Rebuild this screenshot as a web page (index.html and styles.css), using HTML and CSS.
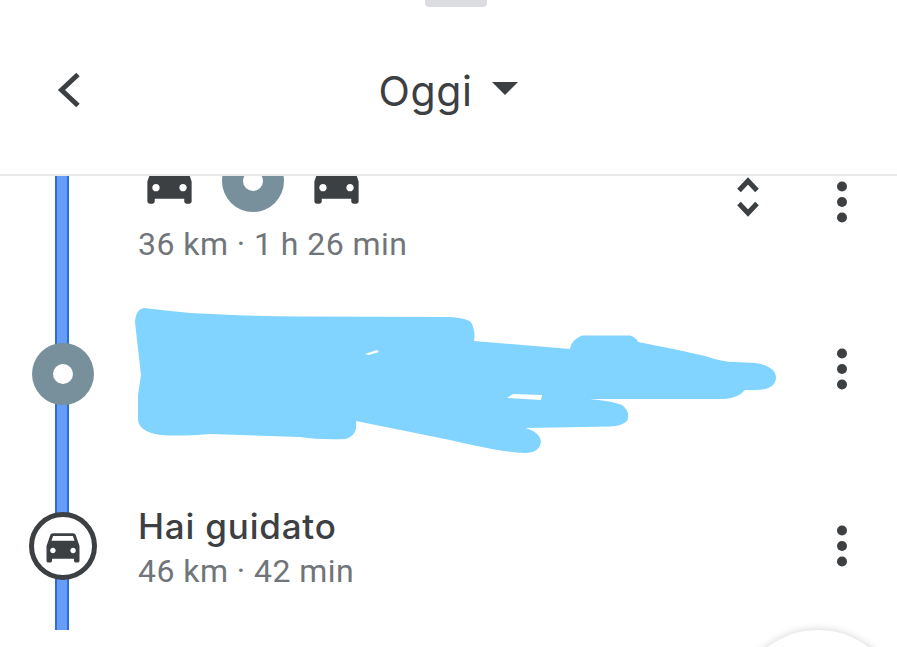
FILE: index.html
```html
<!DOCTYPE html>
<html lang="en">
<head>
    <meta charset="UTF-8">
    <meta name="viewport" content="width=device-width, initial-scale=1.0">
    <title>Oggi</title>
    <link rel="stylesheet" href="styles.css">
</head>
<body>
    <svg width="0" height="0" class="defs">
        <symbol id="car" viewBox="0 0 24 24">
            <path d="M18.92 6.01C18.72 5.42 18.16 5 17.5 5h-11c-.66 0-1.21.42-1.42 1.01L3 12v8c0 .55.45 1 1 1h1c.55 0 1-.45 1-1v-1h12v1c0 .55.45 1 1 1h1c.55 0 1-.45 1-1v-8l-2.08-5.99zM6.500 16c-.83 0-1.500-.67-1.500-1.500S5.670 13 6.500 13s1.500.67 1.500 1.500S7.330 16 6.500 16zm11 0c-.83 0-1.500-.67-1.500-1.500s.67-1.500 1.500-1.500 1.500.67 1.500 1.500-.67 1.500-1.500 1.500zM5.700 9.200l.9-2.700h10.800l.9 2.700H5.700z"/>
        </symbol>
        <symbol id="stop" viewBox="0 0 62 62">
            <circle cx="31" cy="31" r="31" fill="#78909c"/>
            <circle cx="31" cy="31" r="10" fill="#fff"/>
        </symbol>
        <symbol id="dots" viewBox="0 0 24 48">
            <circle cx="12" cy="8.500" r="5"/>
            <circle cx="12" cy="24" r="5"/>
            <circle cx="12" cy="39.500" r="5"/>
        </symbol>
    </svg>

    <div class="screen">
        <div class="handle"></div>

        <!-- Header -->
        <header class="topbar">
            <button class="back" aria-label="Indietro">
                <svg width="24" height="36" viewBox="0 0 24 36"><path d="M21 2.500 4.500 18 21 33.500"/></svg>
            </button>
            <div class="title">
                <span>Oggi</span>
                <svg class="caret" width="26" height="13" viewBox="0 0 26 13"><path d="M0 0h26L13 13z"/></svg>
            </div>
        </header>

        <!-- Timeline -->
        <main class="timeline">
            <section class="row row-first">
                <div class="marker"></div>
                <div class="info">
                    <div class="chips">
                        <svg class="chip-car"><use href="#car"/></svg>
                        <svg class="chip-stop"><use href="#stop"/></svg>
                        <svg class="chip-car"><use href="#car"/></svg>
                    </div>
                    <p class="meta">36 km · 1 h 26 min</p>
                </div>
                <svg class="expand" width="24" height="42" viewBox="0 0 24 42">
                    <path d="M3 15.500 12 6 21 15.500M3 28.500 12 38 21 28.500"/>
                </svg>
                <svg class="more"><use href="#dots"/></svg>
            </section>

            <section class="row row-place">
                <div class="marker">
                    <svg class="stop-big"><use href="#stop"/></svg>
                </div>
                <div class="info"></div>
                <svg class="more"><use href="#dots"/></svg>
            </section>

            <section class="row row-drive">
                <div class="marker">
                    <div class="drive-badge">
                        <svg class="badge-car"><use href="#car"/></svg>
                    </div>
                </div>
                <div class="info">
                    <h2 class="name">Hai guidato</h2>
                    <p class="meta">46 km · 42 min</p>
                </div>
                <svg class="more"><use href="#dots"/></svg>
            </section>
        </main>

        <!-- Hand drawn cover over the place name -->
        <svg class="scribble" width="897" height="647" viewBox="0 0 897 647">
            <path class="ink" d="M135 322Q136 308 145 308Q152 309 190 313Q240 316 300 316.500L450 317Q466 318 471 322Q476 332 474 341L570 349Q571 340 582 335.500L630 335.500Q637 338 638 342Q680 350 705 356Q722 362 735 362L755 363Q776 366 776 378Q775 390 755 390L745 390Q738 398 725 399L590 399Q612 401 622 405Q631 412 627 421Q622 426 610 426.500L525 428Q540 432 541 442Q539 453 525 453Q500 452 450 440L356 421Q358 436 345 439Q320 440 300 437L210 434Q170 437 155 434Q139 430 138 420L138 395L141 375L137 340Z"/>
            <path class="gap" d="M507 398 513 394 542 395 541 400Z"/>
            <path class="gap" d="M365 354 377 350 379 352 369 355Z"/>
        </svg>

        <div class="fab"></div>
    </div>
</body>
</html>
```

FILE: styles.css
```css
/* Global Styling */
body {
    margin: 0;
    background: #ffffff;
    color: #3c4043;
    font-family: Inter, Roboto, sans-serif;
}

.defs {
    position: absolute;
}

svg {
    display: block;
    fill: #3c4043;
}

.screen {
    width: 897px;
    height: 647px;
    position: relative;
    overflow: hidden;
}

/* Header */
.handle {
    width: 62px;
    height: 7px;
    position: absolute;
    top: 0;
    left: 425px;
    border-radius: 0 0 4px 4px;
    background: #dcdde0;
}

.topbar {
    height: 174px;
    border-bottom: 2px solid #e8e9ea;
    display: flex;
    align-items: center;
    justify-content: center;
    position: relative;
}

.back {
    position: absolute;
    left: 57px;
    top: 72px;
    padding: 0;
    border: 0;
    background: none;
}

.back path {
    fill: none;
    stroke: #3c4043;
    stroke-width: 5;
}

.title {
    display: flex;
    align-items: center;
    gap: 20px;
    font-size: 41px;
    letter-spacing: 0.6px;
    line-height: 48px;
    margin-top: 8px;
}

.caret {
    margin-top: -5px;
}

/* Timeline */
.timeline {
    position: relative;
    height: 471px;
    overflow: hidden;
}

.timeline::before {
    content: "";
    position: absolute;
    left: 55px;
    top: 0;
    width: 10px;
    height: 454px;
    background: #669df6;
    border-left: 2px solid #2a6fd8;
    border-right: 2px solid #2a6fd8;
}

.row {
    display: flex;
    position: relative;
}

.row-first {
    height: 124px;
}

.row-place {
    height: 148px;
    align-items: center;
}

.row-drive {
    height: 196px;
    align-items: center;
}

.marker {
    width: 125px;
    flex: none;
    display: flex;
    justify-content: center;
}

.info {
    flex: 1;
    padding-left: 13px;
}

.chips {
    display: flex;
    align-items: center;
    gap: 23px;
    margin: -26px 0 0 2px;
}

.chip-car {
    width: 59px;
    height: 59px;
}

.chip-stop {
    width: 62px;
    height: 62px;
}

.meta {
    margin: 0;
    font-family: Roboto, sans-serif;
    font-size: 32px;
    letter-spacing: 0.45px;
    line-height: 38px;
    color: #70757a;
}

.row-first .meta {
    margin-top: 13px;
}

.row-drive .info {
    padding-top: 2px;
}

.row-drive .meta {
    margin-top: 5px;
}

.name {
    margin: 0;
    font-size: 35px;
    letter-spacing: 0.8px;
    line-height: 42px;
    font-weight: 500;
    color: #3c4043;
}

.expand {
    flex: none;
    margin: -1px 70px 0 0;
}

.expand path {
    fill: none;
    stroke: #3c4043;
    stroke-width: 5;
}

.more {
    flex: none;
    width: 24px;
    height: 48px;
    margin-right: 43px;
}

.row-first .more {
    margin-top: 2px;
}

.row-place .more {
    margin-top: -11px;
}

.stop-big {
    width: 62px;
    height: 62px;
}

.drive-badge {
    width: 58px;
    height: 58px;
    border: 5px solid #3c4043;
    border-radius: 50%;
    background: #ffffff;
    display: flex;
    align-items: center;
    justify-content: center;
}

.badge-car {
    width: 44px;
    height: 44px;
}

/* Overlays */
.scribble {
    position: absolute;
    left: 0;
    top: 0;
}

.scribble .ink {
    fill: #80d4ff;
}

.scribble .gap {
    fill: #ffffff;
}

.fab {
    position: absolute;
    left: 734px;
    top: 630px;
    width: 168px;
    height: 168px;
    border-radius: 50%;
    background: #ffffff;
    box-shadow: 0 0 8px rgba(0, 0, 0, 0.18);
}
```
